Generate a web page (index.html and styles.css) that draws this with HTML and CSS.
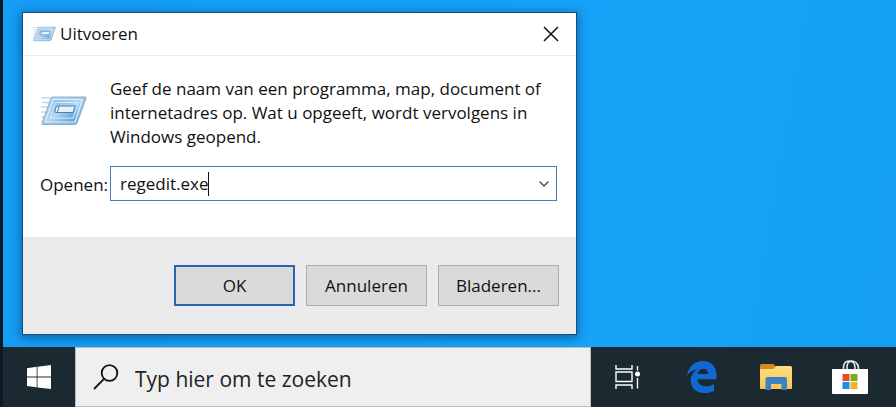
FILE: index.html
```html
<!DOCTYPE html>
<html lang="nl">
<head>
<meta charset="utf-8">
<meta name="viewport" content="width=device-width, initial-scale=1">
<title>Uitvoeren</title>
<link rel="stylesheet" href="styles.css">
</head>
<body>
<svg class="defs" aria-hidden="true">
  <defs>
    <linearGradient id="frame" x1="0" y1="0" x2="1" y2="1">
      <stop offset="0" stop-color="#c5dcef"/><stop offset=".5" stop-color="#9cc6e8"/><stop offset="1" stop-color="#6ea9dc"/>
    </linearGradient>
    <linearGradient id="glass" x1="0" y1="0" x2="1" y2="1">
      <stop offset="0" stop-color="#7fb4e4"/><stop offset=".5" stop-color="#b4d7f3"/><stop offset="1" stop-color="#3f8dd8"/>
    </linearGradient>
    <linearGradient id="folder" x1="0" y1="0" x2="0" y2="1">
      <stop offset="0" stop-color="#ffdf83"/><stop offset="1" stop-color="#f8c552"/>
    </linearGradient>
    <symbol id="run" viewBox="0 0 46 30">
      <path d="M0 2h12M1 6.500h9M0 11h8M0 16h6M0 21h5" stroke="#b9d9f2" stroke-width="1.500"/>
      <path d="M12 1h32q1.500 0 1 1.500L36 27q-.5 1.500-2 1.500H2q-1.500 0-1-1.500L10 2.500Q10.500 1 12 1z" fill="url(#frame)" stroke="#8fb0cb"/>
      <path d="M12.500 3.500h29L34 26H4z" fill="url(#glass)" stroke="#e4f1fa" stroke-width="1.200"/>
      <path d="M14.500 6.500h23L32 22H9z" fill="url(#glass)" stroke="#d8ebf8"/>
      <path d="M17 10h17l-2 6.500H15q-1.500 0-1-2l1-3q.5-1.500 2-1.500z" fill="#e6f2fb" stroke="#4f7ea8"/>
      <path d="M18 10.500l-1.500 5.500" stroke="#4f7ea8"/>
    </symbol>
  </defs>
</svg>
<div class="screen">
  <main class="desktop">
    <form class="dialog" role="dialog" aria-labelledby="dialog-title" onsubmit="return false">
      <header class="titlebar">
        <svg class="title-icon" aria-hidden="true"><use href="#run"/></svg>
        <h1 class="title" id="dialog-title">Uitvoeren</h1>
        <button class="close" type="button" aria-label="Sluiten">
          <svg viewBox="0 0 16 16" width="16" height="16" fill="none" stroke="#111" stroke-width="1.500"><path d="M1 1l14 14M15 1L1 15"/></svg>
        </button>
      </header>
      <div class="content">
        <div class="intro">
          <svg class="run-icon" aria-hidden="true"><use href="#run"/></svg>
          <p class="message">Geef de naam van een programma, map, document of internetadres op. Wat u opgeeft, wordt vervolgens in Windows geopend.</p>
        </div>
        <div class="field">
          <label class="field-label" for="command">Openen:</label>
          <div class="combo">
            <input class="command" id="command" type="text" value="regedit.exe" spellcheck="false" autocomplete="off">
            <span class="caret"></span>
            <button class="expand" type="button" aria-label="Lijst openen">
              <svg viewBox="0 0 12 8" width="12" height="8" fill="none" stroke="#444" stroke-width="1.300"><path d="M1.500 1.500L6 6l4.500-4.500"/></svg>
            </button>
          </div>
        </div>
      </div>
      <footer class="actions">
        <button class="button button-default" type="submit">OK</button>
        <button class="button" type="button">Annuleren</button>
        <button class="button" type="button">Bladeren...</button>
      </footer>
    </form>
  </main>
  <nav class="taskbar">
    <button class="start" type="button" aria-label="Start">
      <svg viewBox="0 0 24 24" width="24" height="24" fill="#fff"><path d="M0 3.200L9.700 1.800V11.600H0zM10.500 1.700L24 0V11.600H10.500zM0 12.500H9.700V22.300L0 21zM10.500 12.500H24V24L10.500 22.400z"/></svg>
    </button>
    <label class="search">
      <svg viewBox="0 0 26 26" width="26" height="26" fill="none" stroke="#111" stroke-width="1.800" aria-hidden="true"><circle cx="16.500" cy="9" r="7.800"/><path d="M11 14.800L1 25"/></svg>
      <input class="search-input" type="text" placeholder="Typ hier om te zoeken" aria-label="Typ hier om te zoeken">
    </label>
    <div class="apps">
      <button class="app" type="button" aria-label="Taakweergave">
        <svg viewBox="0 0 26 24" width="26" height="24" fill="none" stroke="#fff" stroke-width="1.400"><path d="M1 0v4h16V0M1 24v-4h16v4M1 7h16v9.500H1zM22.500 1v4.500M22.500 13v10.500"/><circle cx="22.500" cy="9" r="2.500" fill="#fff" stroke="none"/></svg>
      </button>
      <button class="app" type="button" aria-label="Microsoft Edge">
        <svg viewBox="0 0 30 32" width="30" height="32" fill="#1268d2"><path d="M0 14.500C1.500 5.500 7.500 0 15.800 0 24.500 0 29.500 6.200 29.500 14v4.300H10.300c.4 4.700 4 7 8.700 7 3 0 5.700-.9 8-2.300v6.700C24.300 31.200 21.200 32 17.500 32 9 32 3.700 26.800 3.700 19.500c0-4.800 2.600-9 7.200-11.300C5.800 8.600 2.500 11 0 14.500zM10.500 13h10.700c0-3.300-1.700-5.300-4.900-5.300-3 0-5.200 2.100-5.800 5.300z"/></svg>
      </button>
      <button class="app" type="button" aria-label="Verkenner">
        <svg viewBox="0 0 32 27" width="32" height="27"><path d="M0 1.500Q0 0 1.500 0h12L16 2.500V7H0z" fill="#d48a1d"/><path d="M0 5h13.500l2.500-3h14.500Q32 2 32 3.500V24q0 1-1 1H1q-1 0-1-1z" fill="url(#folder)"/><path d="M5.500 26V15q0-2 2-2h17.500q2 0 2 2v11h-5.500v-6H11v6z" fill="#3b82c4"/></svg>
      </button>
      <button class="app" type="button" aria-label="Microsoft Store">
        <svg viewBox="0 0 36 34" width="36" height="34"><path d="M11.500 10V8C11.500 3 14 1 17 1s6 2 6 7v2M15 10V8c0-5 2-7 4.500-7S26.500 3 26.500 8v2" fill="none" stroke="#e9eeee" stroke-width="1.500"/><path d="M0 9h36v24q0 1-1 1H1q-1 0-1-1z" fill="#fff"/><path d="M10.500 14h7v7h-7z" fill="#e64a2e"/><path d="M18.500 14h7v7h-7z" fill="#74b014"/><path d="M10.500 22h7v7h-7z" fill="#1d8fe3"/><path d="M18.500 22h7v7h-7z" fill="#f4b124"/></svg>
      </button>
    </div>
  </nav>
</div>
</body>
</html>
```
FILE: styles.css
```css
* { box-sizing: border-box; }

body {
  margin: 0;
  font-family: "Open Sans", "Noto Sans", sans-serif;
  font-size: 17px;
  line-height: 24px;
  color: #111;
}

button {
  padding: 0;
  border: 0;
  background: none;
  font: inherit;
  color: inherit;
}

input {
  min-width: 0;
  padding: 0;
  border: 0;
  outline: 0;
  background: none;
  font: inherit;
  color: inherit;
}

svg { display: block; flex: none; }

.defs { position: absolute; width: 0; height: 0; }

.screen {
  display: flex;
  flex-direction: column;
  min-height: 100vh;
  border-left: 3px solid #0b1a25;
  background: linear-gradient(100deg, #159cf4, #16a3f8 70%, #149ff4);
}

.desktop { flex: 1; padding: 12px 19px; }

.dialog {
  width: 100%;
  max-width: 555px;
  border: 1px solid #174e73;
  background: #fff;
  box-shadow: 0 2px 9px 1px #04406f99;
}

.titlebar {
  display: flex;
  align-items: center;
  gap: 4px;
  height: 43px;
  padding: 0 16px 0 10px;
  border-bottom: 1px solid #ececec;
}

.title-icon { width: 23px; height: 16px; }
.title { flex: 1; margin: 0; font-size: 17px; font-weight: 400; }
.close { display: grid; place-items: center; width: 18px; height: 24px; }

.content { padding: 21px 19px 36px 17px; }
.intro { display: flex; align-items: flex-start; margin-bottom: 17px; }
.run-icon { width: 46px; height: 30px; margin: 19px 23px 0 1px; }
.message { flex: 1; margin: 0 -16px 0 0; }

.field { display: flex; align-items: center; }
.field-label { flex: none; width: 70px; padding-top: 2px; }

.combo {
  display: flex;
  flex: 1;
  align-items: center;
  height: 35px;
  padding: 0 6px 0 9px;
  border: 1px solid #4a7dbd;
}

.command { field-sizing: content; height: 32px; }
.caret { width: 1px; height: 24px; background: #111; }
.expand { margin-left: auto; }

.actions {
  display: flex;
  justify-content: flex-end;
  gap: 11px;
  padding: 28px 17px;
  background: #ebebeb;
}

.button {
  width: 121px;
  height: 41px;
  border: 1px solid #adadad;
  background: #dadada;
}

.button-default { border: 2px solid #2a62b8; }

.taskbar {
  display: flex;
  height: 60px;
  background: #1b2a31;
}

.start { display: grid; place-items: center; width: 72px; }

.search {
  display: flex;
  flex: 0 1 516px;
  align-items: center;
  gap: 16px;
  padding: 0 17px;
  border: 1px solid #b5bfc5;
  background: #efefef;
}

.search-input { flex: 1; height: 56px; padding-top: 4px; font-size: 21px; }
.search-input::placeholder { color: #222; opacity: 1; }

.apps { display: flex; flex: 1; }
.app { display: grid; flex: 0 1 74px; place-items: center; }
```
